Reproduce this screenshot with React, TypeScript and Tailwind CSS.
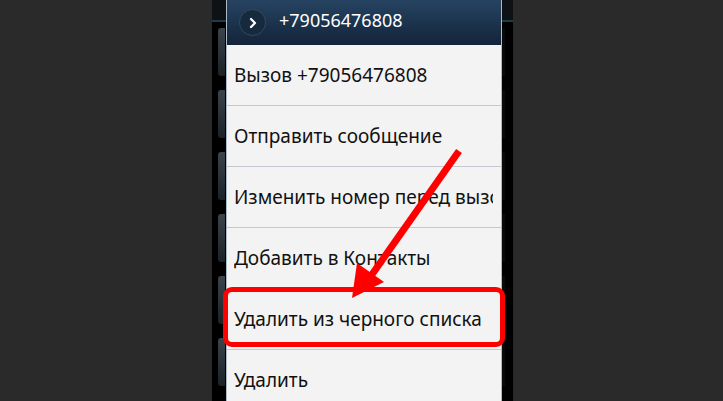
import React from "react";

const rows = [
  "Вызов +79056476808",
  "Отправить сообщение",
  "Изменить номер перед вызовом",
  "Добавить в Контакты",
  "Удалить из черного списка",
  "Удалить",
];

function SideStrip({ side }: { side: "left" | "right" }) {
  return (
    <div className="flex flex-col h-full">
      <div className="h-[20px] bg-[#0e1214] shrink-0" />
      <div className="h-[2px] bg-[#1e3b4a] shrink-0" />
      <div className={`flex flex-col gap-[14px] pt-[6px] ${side === "left" ? "items-end pr-[1px]" : "items-start"}`}>
        {[0, 1, 2, 3, 4, 5].map((i) => (
          <div
            key={i}
            className={
              side === "left"
                ? "w-[7px] h-[48px] rounded-l-[3px] bg-gradient-to-b from-[#3c454c] to-[#1c2226]"
                : "w-[3px] h-[48px] bg-[#0a0a0a]"
            }
          />
        ))}
      </div>
    </div>
  );
}

export default function App() {
  return (
    <div className="w-[723px] h-[401px] bg-[#2a2a2a] flex justify-start overflow-hidden" style={{ fontFamily: '"Noto Sans", "DejaVu Sans", sans-serif' }}>
      <div className="ml-[212px] w-[301px] h-full bg-black flex relative">
        <div className="w-[14px] h-full">
          <SideStrip side="left" />
        </div>
        <div className="w-[276px] h-full flex flex-col border-x border-[#a9bac8] bg-[#f3f3f3]">
          <div className="h-[45px] shrink-0 bg-gradient-to-b from-[#264462] to-[#13243a] flex items-center pl-[12px] gap-[13px]">
            <div className="w-[27px] h-[27px] rounded-full bg-[#162a3e] border border-[#34495c] flex items-center justify-center">
              <svg width="12" height="12" viewBox="0 0 12 12">
                <path d="M4 2 L8 6 L4 10" fill="none" stroke="#ffffff" strokeWidth="2.2" strokeLinecap="round" strokeLinejoin="round" />
              </svg>
            </div>
            <span className="text-white text-[18px] leading-none mb-[5px]">+79056476808</span>
          </div>
          {rows.map((r, i) => (
            <div
              key={i}
              className={`h-[61px] shrink-0 flex items-center pl-[7px] pr-[8px] overflow-hidden ${i < rows.length - 1 ? "border-b border-[#c3c9cf]" : ""}`}
            >
              <span className="text-[#111] text-[19px] whitespace-nowrap overflow-hidden">{r}</span>
            </div>
          ))}
        </div>
        <div className="w-[11px] h-full">
          <SideStrip side="right" />
        </div>
        <div className="absolute left-[11px] top-[287px] w-[282px] h-[60px] border-[5px] border-[#ff0000] rounded-[9px]" />
        <svg className="absolute left-0 top-0" width="301" height="401" viewBox="212 0 301 401">
          <line x1="459" y1="151" x2="366" y2="283" stroke="#ff0000" strokeWidth="7" strokeLinecap="butt" />
          <polygon points="352,298 384,282 357,263" fill="#ff0000" />
        </svg>
      </div>
    </div>
  );
}
